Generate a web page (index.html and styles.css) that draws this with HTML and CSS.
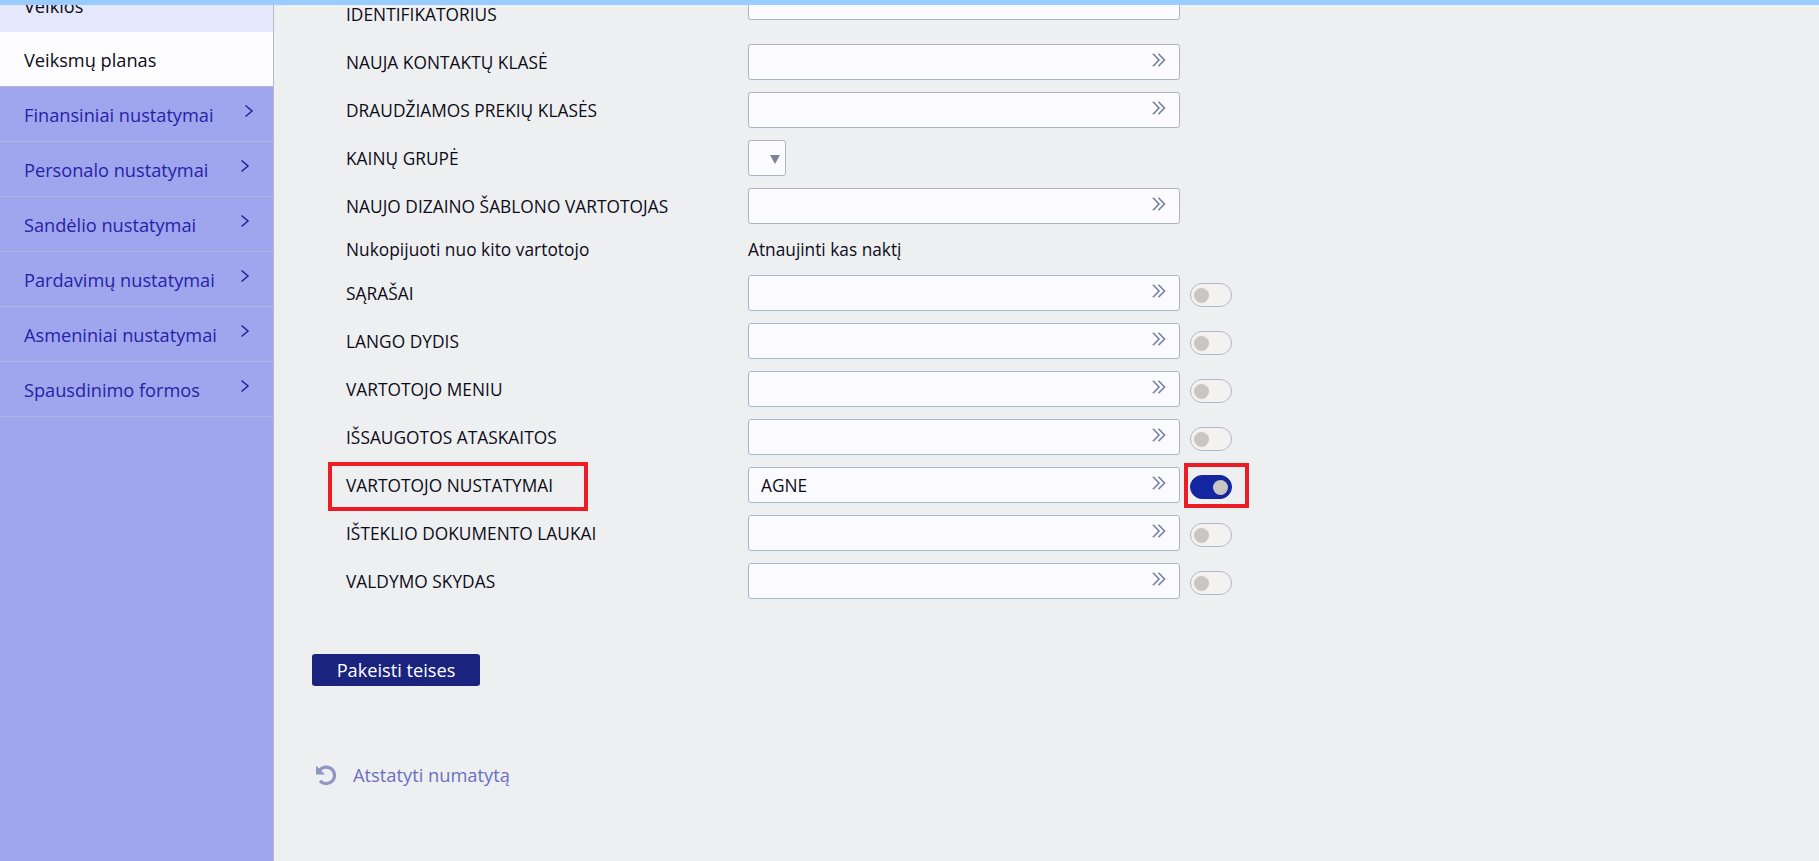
FILE: index.html
```html
<!DOCTYPE html>
<html lang="lt">
<head>
<meta charset="utf-8">
<title>Vartotojo nustatymai</title>
<link rel="stylesheet" href="styles.css">
</head>
<body>
<svg class="defs" width="0" height="0">
  <symbol id="dbl" viewBox="0 0 14 14"><path d="M1 .8 7 7l-6 6.200M6.500 .8 12.500 7l-6 6.200" fill="none" stroke="#74809f" stroke-width="1.600"/></symbol>
  <symbol id="chev" viewBox="0 0 10 14"><path d="M1.500 1.500 8 7l-6.500 5.500" fill="none" stroke="#1f2196" stroke-width="1.500"/></symbol>
</svg>
<div class="topbar"></div>
<div class="layout">
  <nav class="sidebar">
    <a class="item item-clipped">Veiklos</a>
    <a class="item item-active">Veiksmų planas</a>
    <a class="item item-first-sub"><span class="item-text">Finansiniai nustatymai</span><svg class="chev"><use href="#chev"/></svg></a>
    <a class="item"><span class="item-text">Personalo nustatymai</span><svg class="chev"><use href="#chev"/></svg></a>
    <a class="item"><span class="item-text">Sandėlio nustatymai</span><svg class="chev"><use href="#chev"/></svg></a>
    <a class="item"><span class="item-text">Pardavimų nustatymai</span><svg class="chev"><use href="#chev"/></svg></a>
    <a class="item"><span class="item-text">Asmeniniai nustatymai</span><svg class="chev"><use href="#chev"/></svg></a>
    <a class="item"><span class="item-text">Spausdinimo formos</span><svg class="chev"><use href="#chev"/></svg></a>
  </nav>
  <main class="content">
    <div class="row row-first"><label class="label">IDENTIFIKATORIUS</label><div class="input"></div></div>
    <div class="row"><label class="label">NAUJA KONTAKTŲ KLASĖ</label><div class="input"><svg class="dbl"><use href="#dbl"/></svg></div></div>
    <div class="row"><label class="label">DRAUDŽIAMOS PREKIŲ KLASĖS</label><div class="input"><svg class="dbl"><use href="#dbl"/></svg></div></div>
    <div class="row"><label class="label">KAINŲ GRUPĖ</label><div class="select"><span class="arrow"></span></div></div>
    <div class="row"><label class="label">NAUJO DIZAINO ŠABLONO VARTOTOJAS</label><div class="input"><svg class="dbl"><use href="#dbl"/></svg></div></div>
    <div class="row row-text"><span class="label">Nukopijuoti nuo kito vartotojo</span><span class="note">Atnaujinti kas naktį</span></div>
    <div class="row"><label class="label">SĄRAŠAI</label><div class="input"><svg class="dbl"><use href="#dbl"/></svg></div><span class="toggle"><span class="knob"></span></span></div>
    <div class="row"><label class="label">LANGO DYDIS</label><div class="input"><svg class="dbl"><use href="#dbl"/></svg></div><span class="toggle"><span class="knob"></span></span></div>
    <div class="row"><label class="label">VARTOTOJO MENIU</label><div class="input"><svg class="dbl"><use href="#dbl"/></svg></div><span class="toggle"><span class="knob"></span></span></div>
    <div class="row"><label class="label">IŠSAUGOTOS ATASKAITOS</label><div class="input"><svg class="dbl"><use href="#dbl"/></svg></div><span class="toggle"><span class="knob"></span></span></div>
    <div class="row"><label class="label">VARTOTOJO NUSTATYMAI</label><div class="input">AGNE<svg class="dbl"><use href="#dbl"/></svg></div><span class="toggle toggle-on"><span class="knob"></span></span></div>
    <div class="row"><label class="label">IŠTEKLIO DOKUMENTO LAUKAI</label><div class="input"><svg class="dbl"><use href="#dbl"/></svg></div><span class="toggle"><span class="knob"></span></span></div>
    <div class="row"><label class="label">VALDYMO SKYDAS</label><div class="input"><svg class="dbl"><use href="#dbl"/></svg></div><span class="toggle"><span class="knob"></span></span></div>
    <button class="btn">Pakeisti teises</button>
    <a class="reset">
      <svg class="reset-icon" viewBox="0 0 22 22"><path d="M4.500 6.500A8.300 8.300 0 1 1 5 16.800" fill="none" stroke="#8f96c6" stroke-width="3.200"/><path d="M1 1.500v9h9z" fill="#8f96c6"/></svg>
      <span>Atstatyti numatytą</span>
    </a>
  </main>
</div>
<div class="mark mark-label"></div>
<div class="mark mark-toggle"></div>
</body>
</html>
```
FILE: styles.css
```css
* { box-sizing: border-box; }
html, body { margin: 0; height: 100%; overflow: hidden; }
body {
  position: relative;
  display: flex;
  flex-direction: column;
  background: #eeeff1;
  color: #0c0c18;
  font-family: "Open Sans", "Noto Sans", sans-serif;
  font-size: 17.3px;
}
.defs { position: absolute; }
.topbar { height: 5px; flex: none; background: #99ccff; position: relative; z-index: 2; }
.layout { flex: 1; display: flex; min-height: 0; overflow: hidden; }

.sidebar {
  width: 274px;
  flex: none;
  background: #a0a6ee;
  border-right: 1px solid #b4b8cc;
  color: #2522a6;
}
.item {
  height: 55px;
  display: flex;
  align-items: center;
  padding: 1px 0 0 24px;
  border-bottom: 1px solid #b2b6de;
  font-size: 18.200px;
}
.item-clipped { height: 54px; margin-top: -27px; background: #e4e8fa; color: #0c0c18; border-bottom: 0; }
.item-active { height: 55px; background: #fdfdff; color: #0c0c18; border-bottom: 1px solid #b6b8c8; }
.item-text { width: 216px; flex: none; white-space: nowrap; }
.chev { width: 10px; height: 14px; margin-top: -7px; }
.item-first-sub .chev { margin-left: 4px; }

.content { flex: 1; padding-left: 72px; margin-top: -21px; }
.row { display: flex; align-items: flex-start; height: 36px; margin-bottom: 12px; }
.row-first { height: 48px; }
.row-first .label { padding-top: 13px; }
.row-text { height: 27px; align-items: center; }
.row-text .label { line-height: 27px; height: 27px; padding-top: 0; }
.label { width: 402px; height: 36px; flex: none; padding-top: 1px; line-height: 36px; white-space: nowrap; letter-spacing: .04px; }
.note { white-space: nowrap; }
.input {
  width: 432px;
  height: 36px;
  flex: none;
  display: flex;
  align-items: center;
  padding: 0 13px 0 12px;
  background: #fbfbff;
  border: 1px solid #adb5c9;
  border-radius: 3px;
}
.dbl { width: 14px; height: 14px; margin-left: auto; margin-top: -5px; }
.select {
  width: 38px;
  height: 36px;
  display: flex;
  align-items: center;
  justify-content: flex-end;
  padding-right: 5px;
  background: #fbfbff;
  border: 1px solid #adb5c9;
  border-radius: 3px;
}
.arrow {
  width: 0;
  height: 0;
  border-left: 5px solid transparent;
  border-right: 5px solid transparent;
  border-top: 9px solid #7f8296;
  margin-top: 2px;
}
.toggle {
  width: 42px;
  height: 24px;
  margin: 8px 0 0 10px;
  padding: 3px;
  flex: none;
  display: flex;
  align-items: center;
  background: #f3f2f1;
  border: 1px solid #b1b8cc;
  border-radius: 12px;
}
.knob { width: 15px; height: 15px; border-radius: 50%; background: #c9c5c2; }
.toggle-on { background: #1425a0; border-color: #1425a0; justify-content: flex-end; }

.btn {
  display: block;
  width: 168px;
  height: 32px;
  margin: 55px 0 0 -34px;
  padding: 0;
  background: #1a237e;
  color: #fff;
  border: 0;
  border-radius: 3px;
  font: inherit;
  font-size: 18.200px;
  line-height: 30px;
}
.reset { display: flex; align-items: center; margin: 76px 0 0 -31px; color: #6a71c0; font-size: 18.300px; }
.reset-icon { width: 22px; height: 22px; margin-right: 16px; }

.mark { position: absolute; border: 4px solid #ed1c24; }
.mark-label { left: 328px; top: 462px; width: 260px; height: 49px; }
.mark-toggle { left: 1184px; top: 463px; width: 65px; height: 45px; }
```
